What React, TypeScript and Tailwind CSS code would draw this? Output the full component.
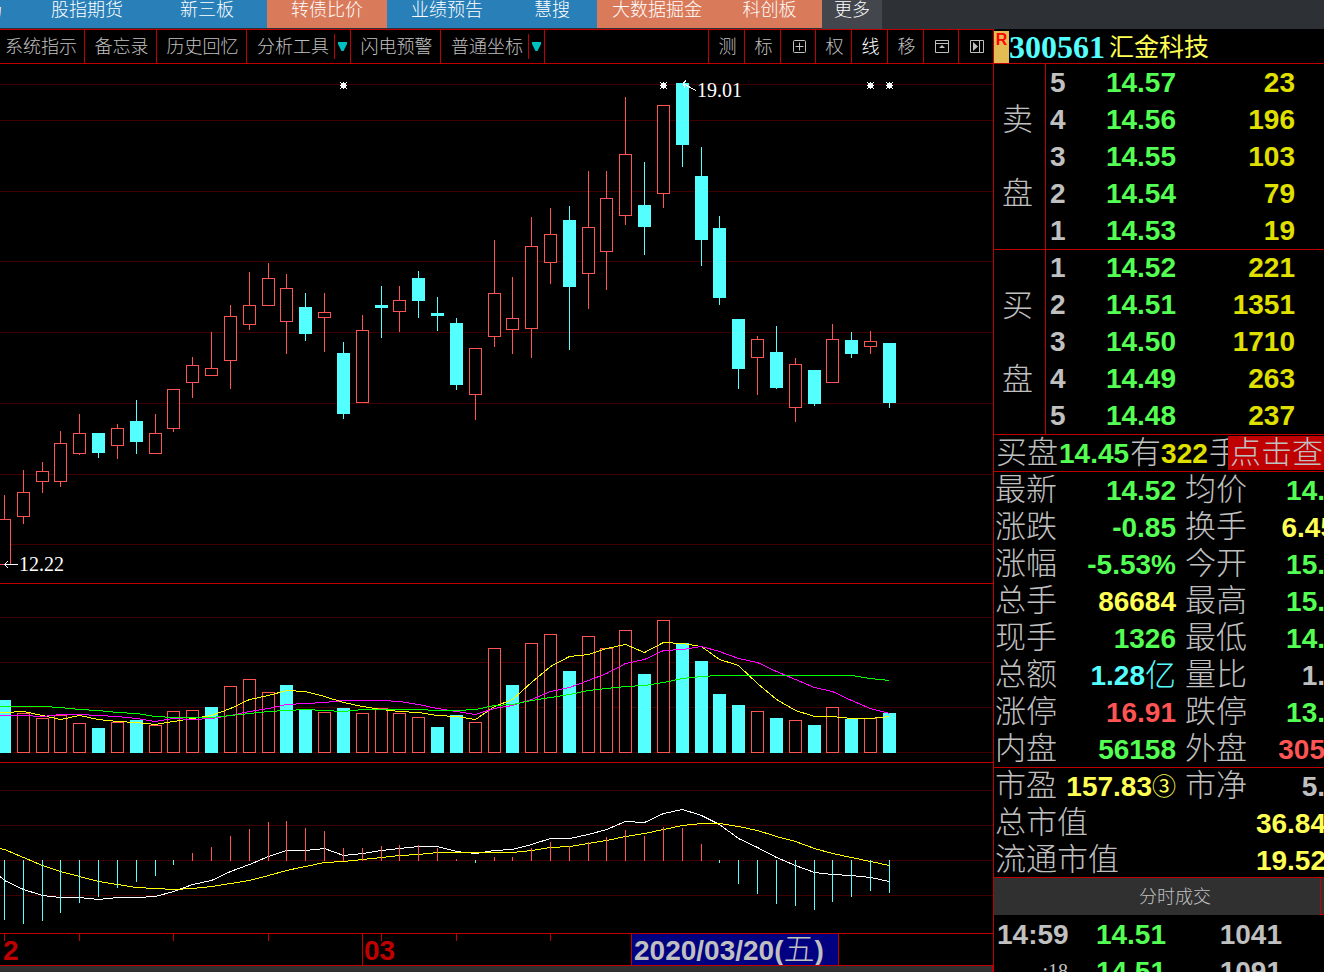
import clsx from "clsx";
import type { ReactNode } from "react";

type Tone = "green" | "yellow" | "gold" | "red" | "cyan" | "gray";

const TONES: Record<Tone, string> = {
  green: "text-[#54ff54]",
  yellow: "text-[#ffff54]",
  gold: "text-[#e0e000]",
  red: "text-[#ff5454]",
  cyan: "text-[#54ffff]",
  gray: "text-[#c0c0c0]",
};

const RISE = "#ff5454";
const FALL = "#54ffff";
const GRID = "#400000";
const FRAME = "#c00000";

const NAV_TABS = [
  { label: "场", className: "w-[27px] justify-start bg-[#2980b9]" },
  { label: "股指期货", className: "w-[120px] bg-[#2980b9]" },
  { label: "新三板", className: "w-[120px] bg-[#2980b9]" },
  { label: "转债比价", className: "w-[120px] bg-[#d97b5b]" },
  { label: "业绩预告", className: "w-[120px] bg-[#2980b9]" },
  { label: "慧搜", className: "w-[90px] bg-[#2980b9]" },
  { label: "大数据掘金", className: "w-[120px] bg-[#d97b5b]" },
  { label: "科创板", className: "w-[105px] bg-[#d97b5b]" },
];

// x, high, body top, body bottom, low, closed up
type Candle = [number, number, number, number, number, boolean];

const CANDLES: Candle[] = [
  [4, 495, 519, 565, 565, true],
  [23, 470, 492, 517, 524, true],
  [42, 462, 471, 482, 493, true],
  [60, 431, 443, 482, 487, true],
  [79, 414, 433, 454, 455, true],
  [98, 433, 433, 453, 458, false],
  [117, 424, 428, 446, 459, true],
  [136, 400, 421, 442, 454, false],
  [155, 414, 433, 454, 454, true],
  [173, 389, 389, 429, 432, true],
  [192, 357, 365, 383, 398, true],
  [211, 332, 368, 376, 376, true],
  [230, 305, 316, 361, 389, true],
  [249, 272, 305, 325, 330, true],
  [268, 263, 278, 306, 306, true],
  [286, 274, 288, 322, 354, true],
  [305, 293, 307, 334, 341, false],
  [324, 293, 312, 318, 352, true],
  [343, 342, 353, 414, 419, false],
  [362, 315, 330, 403, 403, true],
  [381, 286, 305, 308, 338, false],
  [399, 286, 300, 312, 332, true],
  [418, 271, 278, 301, 318, false],
  [437, 297, 313, 316, 331, false],
  [456, 318, 323, 385, 390, false],
  [475, 348, 348, 395, 420, true],
  [494, 240, 293, 337, 347, true],
  [512, 277, 318, 330, 354, true],
  [531, 217, 246, 329, 358, true],
  [550, 208, 234, 263, 284, true],
  [569, 206, 220, 287, 350, false],
  [588, 171, 227, 274, 309, true],
  [606, 171, 198, 252, 290, true],
  [625, 97, 154, 216, 225, true],
  [644, 162, 205, 227, 255, false],
  [663, 105, 105, 194, 208, true],
  [682, 83, 83, 145, 167, false],
  [701, 147, 176, 240, 266, false],
  [719, 216, 228, 298, 305, false],
  [738, 319, 319, 369, 389, false],
  [757, 336, 339, 358, 395, true],
  [776, 326, 352, 388, 389, false],
  [795, 358, 364, 408, 422, true],
  [814, 370, 370, 404, 406, false],
  [832, 324, 339, 383, 383, true],
  [851, 332, 340, 354, 358, false],
  [870, 331, 341, 347, 354, true],
  [889, 343, 343, 403, 408, false],
];

const XS = CANDLES.map((c) => c[0]);

const VOLUME_BASE = 753;
const VOLUME_TOPS = [
  700, 713, 718, 715, 723, 728, 722, 720, 725, 711, 710, 707, 686, 679, 692, 685,
  710, 712, 708, 713, 708, 713, 717, 727, 715, 722, 648, 685, 643, 634, 671, 636,
  648, 630, 674, 620, 643, 661, 694, 705, 711, 718, 720, 725, 707, 719, 718, 713,
];
const VOLUME_DOWN = new Set([
  0, 5, 7, 11, 15, 16, 18, 23, 24, 27, 30, 34, 36, 37, 38, 39, 41, 43, 45, 47,
]);

const VOL_MA5 = [
  712, 711, 715, 719, 715, 719, 721, 722, 724, 721, 718, 715, 708, 699, 695, 690,
  691, 696, 702, 706, 709, 711, 712, 715, 716, 719, 706, 699, 682, 666, 656, 654,
  648, 644, 652, 642, 643, 646, 659, 665, 683, 699, 710, 716, 716, 718, 718, 716,
];
const VOL_MA10 = [
  715, 715, 716, 714, 714, 715, 716, 718, 721, 718, 719, 718, 715, 711, 708, 704,
  703, 702, 700, 700, 700, 701, 704, 708, 711, 714, 708, 705, 699, 691, 687, 680,
  673, 663, 659, 650, 649, 646, 651, 658, 662, 671, 679, 687, 691, 700, 708, 713,
];
const VOL_MA20 = [
  706, 706, 706, 707, 709, 710, 712, 713, 716, 717, 717, 717, 715, 713, 711, 710,
  709, 710, 711, 709, 709, 709, 709, 710, 710, 709, 705, 704, 700, 697, 694, 690,
  688, 686, 685, 682, 678, 676, 675, 675, 675, 675, 675, 675, 675, 675, 678, 680,
];

const MACD_ZERO = 860;
const MACD_BARS = [
  920, 924, 921, 913, 903, 897, 888, 882, 876, 865, 853, 847, 836, 829, 822, 821,
  828, 831, 848, 848, 846, 845, 845, 848, 859, 863, 857, 857, 848, 842, 846, 842,
  837, 830, 836, 827, 828, 844, 863, 884, 894, 904, 906, 910, 902, 897, 891, 893,
];
const DIF = [
  880, 889, 895, 897, 897, 899, 897, 897, 896, 891, 884, 880, 871, 864, 856, 850,
  850, 848, 855, 853, 850, 848, 846, 846, 851, 853, 850, 849, 844, 838, 838, 834,
  829, 821, 822, 813, 809, 815, 824, 838, 847, 857, 865, 872, 874, 875, 877, 881,
];
const DEA = [
  849, 857, 865, 871, 876, 881, 884, 887, 888, 889, 888, 886, 883, 880, 875, 870,
  866, 862, 861, 859, 857, 855, 854, 852, 852, 852, 852, 852, 850, 847, 846, 843,
  840, 836, 833, 829, 825, 823, 823, 826, 830, 836, 841, 848, 853, 857, 861, 865,
];

const SELL = [
  ["5", "14.57", "23"],
  ["4", "14.56", "196"],
  ["3", "14.55", "103"],
  ["2", "14.54", "79"],
  ["1", "14.53", "19"],
];

const BUY = [
  ["1", "14.52", "221"],
  ["2", "14.51", "1351"],
  ["3", "14.50", "1710"],
  ["4", "14.49", "263"],
  ["5", "14.48", "237"],
];

interface Stat {
  name: string;
  value: ReactNode;
  tone: Tone;
  name2: string;
  value2: string;
  tone2: Tone;
}

const STATS: Stat[] = [
  { name: "最新", value: "14.52", tone: "green", name2: "均价", value2: "14.", tone2: "green" },
  { name: "涨跌", value: "-0.85", tone: "green", name2: "换手", value2: "6.45", tone2: "yellow" },
  { name: "涨幅", value: "-5.53%", tone: "green", name2: "今开", value2: "15.", tone2: "green" },
  { name: "总手", value: "86684", tone: "yellow", name2: "最高", value2: "15.", tone2: "green" },
  { name: "现手", value: "1326", tone: "green", name2: "最低", value2: "14.", tone2: "green" },
  { name: "总额", value: <>1.28<Label className="text-[#54ffff]">亿</Label></>, tone: "cyan", name2: "量比", value2: "1.", tone2: "gray" },
  { name: "涨停", value: "16.91", tone: "red", name2: "跌停", value2: "13.", tone2: "green" },
  { name: "内盘", value: "56158", tone: "green", name2: "外盘", value2: "305", tone2: "red" },
];

/* ---------- top bars ---------- */

function NavBar() {
  return (
    <nav className="flex h-[29px] shrink-0 items-start overflow-hidden bg-[#2d3034] text-lg leading-5 font-light text-white">
      {NAV_TABS.map((tab) => (
        <a
          key={tab.label}
          href="#"
          className={clsx("flex h-7 shrink-0 justify-center overflow-hidden whitespace-nowrap", tab.className)}
        >
          {tab.className.includes("justify-start") ? <span className="-ml-4">{tab.label}</span> : tab.label}
        </a>
      ))}
      <button className="flex h-[29px] w-[60px] shrink-0 justify-center bg-[#43474d]">更多</button>
    </nav>
  );
}

function ToolButton({ children, className, arrow }: { children: ReactNode; className: string; arrow?: boolean }) {
  return (
    <button className={clsx("flex shrink-0 items-center border-r border-[#c00000] whitespace-nowrap", className)}>
      {children}
      {arrow && (
        <span className="ml-auto flex h-[25px] w-4 items-center justify-center border-l border-[#c00000]">
          <svg width="9" height="9" viewBox="0 0 9 9" fill="#00c0c0">
            <path d="M0 0h9v2L5.5 9h-2L0 2z" />
          </svg>
        </span>
      )}
    </button>
  );
}

function Toolbar() {
  return (
    <div className="flex h-[35px] shrink-0 border-y border-[#c00000] text-lg leading-none font-light text-[#c0c0c0]">
      <ToolButton className="w-[85px] pl-[5px]">系统指示</ToolButton>
      <ToolButton className="w-[72px] justify-center pl-0.5">备忘录</ToolButton>
      <ToolButton className="w-[90px] justify-center pl-0.5">历史回忆</ToolButton>
      <ToolButton className="w-[104px] pl-[10px]" arrow>分析工具</ToolButton>
      <ToolButton className="w-[90px] justify-center pl-0.5">闪电预警</ToolButton>
      <ToolButton className="w-[104px] pl-[10px]" arrow>普通坐标</ToolButton>
      <div className="flex-1 border-r border-[#c00000]" />
      <ToolButton className="w-9 justify-center pl-0.5">测</ToolButton>
      <ToolButton className="w-9 justify-center pl-0.5">标</ToolButton>
      <ToolButton className="w-[35px] justify-center pl-0.5">
        <svg aria-label="放大" width="13" height="13" viewBox="0 0 13 13" fill="none" stroke="#c0c0c0">
          <rect x="0.5" y="0.5" width="12" height="12" rx="1" />
          <path d="M6.5 2.5v8M2.5 6.5h8" />
        </svg>
      </ToolButton>
      <ToolButton className="w-9 justify-center pl-0.5">权</ToolButton>
      <ToolButton className="w-9 justify-center pl-0.5 text-white">线</ToolButton>
      <ToolButton className="w-9 justify-center pl-0.5">移</ToolButton>
      <ToolButton className="w-[35px] justify-center pl-0.5">
        <svg aria-label="收起" width="14" height="13" viewBox="0 0 14 13" fill="none" stroke="#c0c0c0">
          <path d="M0.5 0.5h13v12h-13zM0.5 3.5h13" />
          <path d="M7 5l3 3H4z" fill="#c0c0c0" stroke="none" />
        </svg>
      </ToolButton>
      <button className="flex w-[34px] items-center justify-center pl-0.5">
        <svg aria-label="展开" width="14" height="13" viewBox="0 0 14 13" fill="none" stroke="#c0c0c0">
          <path d="M0.5 0.5h13v12h-13zM9.500 0.5v12" />
          <path d="M3 2l5 4.5L3 11z" fill="#c0c0c0" stroke="none" />
        </svg>
      </button>
    </div>
  );
}

/* ---------- charts ---------- */

function Pane({ top, grid, className, children }: { top: number; grid: number[]; className: string; children: ReactNode }) {
  return (
    <svg className={clsx("block w-full shrink-0 border-b border-[#c00000]", className)} shapeRendering="crispEdges">
      <g transform={`translate(0 ${-top})`}>
        {grid.map((y) => (
          <rect key={y} x="0" y={y} width="100%" height="1" fill={GRID} />
        ))}
        {children}
      </g>
    </svg>
  );
}

function Bar({ x, top, bottom, up }: { x: number; top: number; bottom: number; up: boolean }) {
  if (!up) return <rect x={x - 6} y={top} width="13" height={bottom - top} fill={FALL} />;
  return <rect x={x - 5.5} y={top + 0.5} width="12" height={bottom - top - 1} fill="#000" stroke={RISE} />;
}

function Line({ ys, color, start }: { ys: number[]; color: string; start: number }) {
  const points = [`0,${start + 0.5}`, ...ys.map((y, i) => `${XS[i] + 0.5},${y + 0.5}`)].join(" ");
  return <polyline points={points} fill="none" stroke={color} />;
}

function Marker({ x }: { x: number }) {
  return (
    <path
      transform={`translate(${x - 3} 82)`}
      d="M1 1h5v5h-5zM0 0h1v1h-1zM3 0h1v1h-1zM6 0h1v1h-1zM0 3h1v1h-1zM6 3h1v1h-1zM0 6h1v1h-1zM3 6h1v1h-1zM6 6h1v1h-1z"
      fill="#fff"
    />
  );
}

function PriceChart() {
  return (
    <Pane top={64} grid={[84, 120, 191, 261, 332, 403, 474, 544]} className="h-[520px]">
      {CANDLES.map(([x, high, top, bottom, low, up]) => (
        <g key={x}>
          <rect x={x} y={high} width="1" height={low - high} fill={up ? RISE : FALL} />
          <Bar x={x} top={top} bottom={bottom} up={up} />
        </g>
      ))}
      {[343, 663, 870, 889].map((x) => (
        <Marker key={x} x={x} />
      ))}
      <path d="M696 90.500L683 83.500M683 83.500l3-3M683 83.500l2 4" stroke="#fff" fill="none" />
      <path d="M18 564.500H4M4.500 564.500l3.500-3.500M4.500 564.500l3.500 3.500" stroke="#fff" fill="none" />
      <text x="697" y="97" fill="#fff" className="font-['Liberation_Serif',serif] text-xl">19.01</text>
      <text x="19" y="571" fill="#fff" className="font-['Liberation_Serif',serif] text-xl">12.22</text>
    </Pane>
  );
}

function VolumeChart() {
  return (
    <Pane top={584} grid={[617, 662, 707, 752]} className="h-[179px]">
      {VOLUME_TOPS.map((top, i) => (
        <Bar key={XS[i]} x={XS[i]} top={top} bottom={VOLUME_BASE} up={!VOLUME_DOWN.has(i)} />
      ))}
      <Line ys={VOL_MA5} start={712} color="#ffff00" />
      <Line ys={VOL_MA10} start={715} color="#ff00ff" />
      <Line ys={VOL_MA20} start={706} color="#00ff00" />
    </Pane>
  );
}

function MacdChart() {
  return (
    <Pane top={763} grid={[790, 825, 860, 895]} className="h-[171px]">
      <Line ys={DIF} start={876} color="#ffffff" />
      <Line ys={DEA} start={848} color="#ffff00" />
      {MACD_BARS.map((y, i) => (
        <rect
          key={XS[i]}
          x={XS[i]}
          y={Math.min(y, MACD_ZERO)}
          width="1"
          height={y < MACD_ZERO ? MACD_ZERO + 1 - y : y - MACD_ZERO}
          fill={y < MACD_ZERO ? RISE : FALL}
        />
      ))}
    </Pane>
  );
}

function DateAxis() {
  return (
    <Pane top={934} grid={[]} className="h-8">
      {[4, 79, 173, 268, 381, 456, 550].map((x) => (
        <rect key={x} x={x} y="934" width="1" height="7" fill={FRAME} />
      ))}
      <rect x="362" y="934" width="1" height="31" fill={FRAME} />
      <g className="text-[28px] font-bold" fill={FRAME}>
        <text x="3" y="960">2</text>
        <text x="364" y="960">03</text>
      </g>
      <rect x="631" y="934" width="208" height="31" fill="#000080" />
      <rect x="631" y="934" width="1" height="31" fill={FRAME} />
      <rect x="838" y="934" width="1" height="31" fill={FRAME} />
      <text x="634" y="960" fill="#c0c0c0" className="text-[28px] font-bold">
        2020/03/20(<tspan className="text-[31px] font-light">五</tspan>)
      </text>
    </Pane>
  );
}

/* ---------- quote panel ---------- */

function Depth({ title, rows, last }: { title: string; rows: string[][]; last?: boolean }) {
  return (
    <div className={clsx("flex shrink-0 border-b border-[#c00000]", last ? "h-[185px]" : "h-[186px]")}>
      <div className="flex w-[52px] shrink-0 flex-col items-center justify-center gap-[37px] border-r border-[#c00000] pr-1 text-[31px] leading-[37px] font-light text-[#c0c0c0]">
        {title.split("").map((ch) => (
          <span key={ch}>{ch}</span>
        ))}
      </div>
      <table className="h-full w-full text-[28px] leading-9 font-bold">
        <tbody>
          {rows.map(([level, price, volume]) => (
            <tr key={price}>
              <th className="w-[30px] p-0 pl-1 text-left text-[#c0c0c0]">{level}</th>
              <td className="w-[100px] p-0 text-right text-[#54ff54]">{price}</td>
              <td className="p-0 pr-[29px] text-right text-[#e0e000]">{volume}</td>
            </tr>
          ))}
        </tbody>
      </table>
    </div>
  );
}

function Label({ children, className = "text-[#c0c0c0]" }: { children: ReactNode; className?: string }) {
  return <span className={clsx("shrink-0 text-[31px] leading-[35px] font-light", className)}>{children}</span>;
}

function StatRow({ name, value, tone, name2, value2, tone2 }: Stat) {
  return (
    <div className="flex h-[37px] shrink-0 pl-px whitespace-nowrap">
      <Label className="w-[62px] text-[#c0c0c0]">{name}</Label>
      <span className={clsx("flex w-[119px] shrink-0 items-center justify-end", TONES[tone])}>{value}</span>
      <Label className="ml-[9px] w-[62px] text-[#c0c0c0]">{name2}</Label>
      <span className={clsx("ml-auto shrink-0", value2.length > 3 ? "-mr-3" : "-mr-px", TONES[tone2])}>
        {value2}
      </span>
    </div>
  );
}

function QuotePanel() {
  return (
    <aside className="flex w-[331px] shrink-0 flex-col overflow-hidden border-l border-[#c00000]">
      <header className="flex h-[35px] shrink-0 items-center border-b border-[#c00000] whitespace-nowrap">
        <span className="mt-px h-8 w-[15px] bg-[#e4bc54] text-center text-base leading-[18px] font-bold text-[#ff0000]">R</span>
        <span className="pt-0.5 font-['Liberation_Serif',serif] text-[32px] leading-8 font-bold text-[#54ffff]">300561</span>
        <h1 className="ml-1 pt-0.5 text-[25px] leading-8 text-[#ffff54]">汇金科技</h1>
      </header>

      <Depth title="卖盘" rows={SELL} />
      <Depth title="买盘" rows={BUY} last />

      <section className="text-[28px] leading-[37px] font-bold">
        <div className="flex h-[37px] border-b border-[#c00000] pl-[2px] whitespace-nowrap">
          <div className="flex w-[232px] shrink-0 overflow-hidden text-[#54ff54]">
            <Label>买盘</Label>
            <span className="px-px">14.45</span>
            <Label>有</Label>
            <span className="pr-px text-[#e0e000]">322</span>
            <Label>手</Label>
          </div>
          <button className="my-px flex flex-1 items-center bg-[#c00000] pl-[2px] text-[31px] leading-8 font-light text-[#c0c0c0]">
            点击查
          </button>
        </div>

        <div className="h-[296px] border-b border-[#c00000]">
          {STATS.map((s) => (
            <StatRow key={s.name} {...s} />
          ))}
        </div>

        <div className="h-[110px] border-b border-[#c00000]">
          <StatRow
            name="市盈"
            value={<>157.83<span className="text-2xl font-normal">③</span></>}
            tone="yellow"
            name2="市净"
            value2="5."
            tone2="gray"
          />
          <div className="flex h-[37px] pl-px whitespace-nowrap">
            <Label>总市值</Label>
            <span className="-mr-[2px] ml-auto text-[#ffff54]">36.84</span>
          </div>
          <div className="flex h-[35px] pl-px whitespace-nowrap">
            <Label>流通市值</Label>
            <span className="-mr-[2px] ml-auto text-[#ffff54]">19.52</span>
          </div>
        </div>
      </section>

      <div className="mb-px flex h-[37px] shrink-0 bg-[#303030]">
        <h2 className="flex flex-1 items-center justify-center border-r border-[#c00000] pl-9 text-lg leading-none font-light text-[#c0c0c0]">
          分时成交
        </h2>
        <span className="w-[3px] border-b border-[#c00000]" />
      </div>

      <table className="w-full shrink-0 text-[28px] leading-[37px] font-bold text-[#c0c0c0]">
        <tbody>
          <tr>
            <td className="w-[76px] p-0 pl-[3px]">14:59</td>
            <td className="w-[96px] p-0 text-right text-[#54ff54]">14.51</td>
            <td className="p-0 pr-[42px] text-right">1041</td>
          </tr>
          <tr>
            <td className="p-0 pr-0.5 text-right align-top font-['Liberation_Serif',serif] text-xl leading-[37px] font-normal">:18</td>
            <td className="p-0 text-right text-[#54ff54]">14.51</td>
            <td className="p-0 pr-[42px] text-right">1091</td>
          </tr>
        </tbody>
      </table>
    </aside>
  );
}

export default function App() {
  return (
    <div className="flex h-screen flex-col overflow-hidden bg-black font-['Liberation_Sans','Noto_Sans_CJK_SC',sans-serif]">
      <NavBar />
      <div className="flex min-h-0 flex-1">
        <main className="flex min-w-0 flex-1 flex-col overflow-hidden">
          <Toolbar />
          <PriceChart />
          <VolumeChart />
          <MacdChart />
          <DateAxis />
          <div className="flex-1 border-r border-[#c00000] bg-[#303030]" />
        </main>
        <QuotePanel />
      </div>
    </div>
  );
}
